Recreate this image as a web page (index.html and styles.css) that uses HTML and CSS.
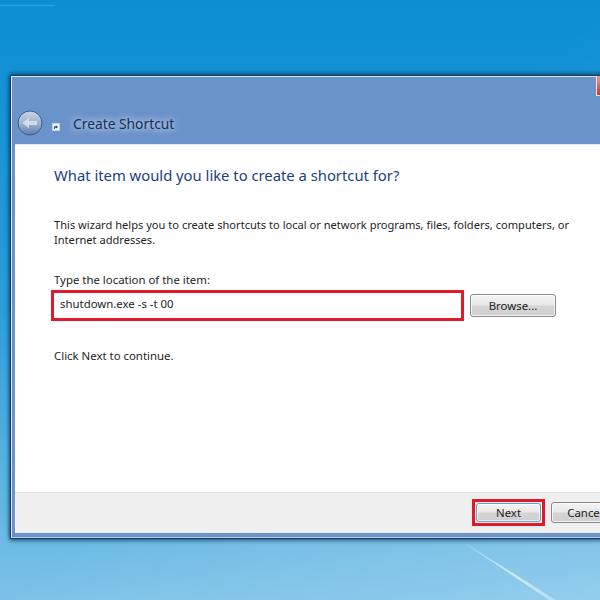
FILE: index.html
```html
<!DOCTYPE html>
<html lang="en">
<head>
<meta charset="utf-8">
<title>Create Shortcut</title>
<link rel="stylesheet" href="styles.css">
</head>
<body>
<main class="desktop">
  <svg class="streak" width="600" height="600" viewBox="0 0 600 600" aria-hidden="true">
    <defs>
      <linearGradient id="streakFade" x1="0" y1="0" x2="1" y2="0">
        <stop offset="0" stop-color="#ffffff" stop-opacity=".3"/>
        <stop offset=".6" stop-color="#ffffff" stop-opacity=".6"/>
        <stop offset="1" stop-color="#ffffff" stop-opacity=".3"/>
      </linearGradient>
    </defs>
    <path d="M458 539 L556 600 L549 600 Z" fill="url(#streakFade)"/>
    <path d="M0 5.500 H55" stroke="#ffffff" stroke-opacity=".16" stroke-width="1.500"/>
  </svg>
  <section class="window">
    <div class="close"></div>
    <header class="titlebar">
      <svg class="back" width="28" height="28" viewBox="0 0 28 28" aria-hidden="true">
        <defs>
          <linearGradient id="backFill" x1="0" y1="0" x2="0" y2="1">
            <stop offset="0" stop-color="#c9d6e6"/>
            <stop offset=".5" stop-color="#9db3d0"/>
            <stop offset="1" stop-color="#5f7fae"/>
          </linearGradient>
        </defs>
        <circle cx="14" cy="14" r="12" fill="url(#backFill)" stroke="#3f5a85" stroke-width="1"/>
        <path d="M6.500 14 L13 8.500 V12 H21 V16 H13 V19.500 Z" fill="#dfe7f1" opacity=".8"/>
      </svg>
      <svg class="appicon" width="8" height="8" viewBox="0 0 10 10" aria-hidden="true">
        <rect x=".5" y=".5" width="9" height="9" fill="#f4f7fb" stroke="#c3d0e3"/>
        <path d="M3 7.500 V5 H6 M4.700 3.500 L6.500 5 L4.700 6.500" fill="none" stroke="#1d3f73" stroke-width="1.300"/>
      </svg>
      <h1 class="wintitle">Create Shortcut</h1>
    </header>
    <div class="client">
      <div class="content">
        <h2 class="heading">What item would you like to create a shortcut for?</h2>
        <p class="intro">This wizard helps you to create shortcuts to local or network programs, files, folders, computers, or Internet addresses.</p>
        <label class="label">Type the location of the item:</label>
        <div class="inputrow">
          <div class="field">shutdown.exe -s -t 00</div>
          <div class="btn browse">Browse...</div>
        </div>
        <p class="continue">Click Next to continue.</p>
      </div>
      <footer class="footer">
        <div class="nextmark"><div class="btn next">Next</div></div>
        <div class="btn cancel">Cancel</div>
      </footer>
    </div>
  </section>
</main>
</body>
</html>
```
FILE: styles.css
```css
* { box-sizing: border-box; }
html, body { margin: 0; padding: 0; }
body { width: 600px; height: 600px; overflow: hidden; font-family: "Noto Sans", "Open Sans", sans-serif; }
.desktop {
  position: relative;
  width: 600px;
  height: 600px;
  overflow: hidden;
  padding: 75px 0 0 10px;
  background:
    linear-gradient(135deg, rgba(255,255,255,0) 50%, rgba(255,255,255,.18) 100%),
    linear-gradient(180deg, #0b8dd4 0%, #2a9cd9 50%, #63b7e4 85%, #7cc2e8 100%);
}
.streak { position: absolute; left: 0; top: 0; }
.window {
  position: relative;
  width: 640px;
  height: 464px;
  background: #6b93cb;
  border: 1px solid #1c3d5c;
  border-right: 0;
  box-shadow: 0 2px 4px rgba(10,50,90,.55), 0 -2px 4px rgba(10,60,100,.55), -1px 0 3px rgba(10,60,100,.4), inset 1px 1px 0 #dbe8f6, inset 0 -1px 0 #b9cce6;
  padding: 0 0 5px 4px;
  display: flex;
  flex-direction: column;
}
.close {
  position: absolute;
  left: 585px;
  top: 0;
  width: 30px;
  height: 20px;
  background: linear-gradient(180deg, #e89a90, #c8392c);
  border: 1px solid #f0e6ea;
  border-top: 0;
}
.titlebar {
  height: 68px;
  display: flex;
  align-items: center;
  padding: 26px 0 0 1px;
  flex: none;
}
.back { flex: none; }
.appicon { flex: none; margin: 7px 0 0 8px; }
.wintitle {
  margin: 0 0 0 13px;
  font-size: 13.800px;
  font-weight: 400;
  color: #1b2f50;
  text-shadow: 0 0 6px rgba(220,232,248,.9), 0 0 10px rgba(220,232,248,.7);
}
.client {
  flex: 1;
  background: #fff;
  display: flex;
  flex-direction: column;
  box-shadow: inset 0 1px 0 #dfe8f4;
}
.content { flex: 1; padding: 20px 0 0 39px; color: #1e1e1e; }
.heading {
  margin: 0;
  font-size: 14.800px;
  line-height: 22px;
  font-weight: 400;
  color: #1a3f80;
}
.intro {
  margin: 31px 0 0;
  width: 530px;
  font-size: 11.100px;
  line-height: 15px;
}
.label { display: block; margin-top: 25px; font-size: 11.400px; line-height: 15px; }
.inputrow { display: flex; align-items: center; margin: 3px 0 0 -3px; }
.field {
  width: 413px;
  height: 31px;
  border: 3px solid #e3182d;
  padding-left: 6px;
  font-size: 11.400px;
  line-height: 21px;
}
.btn {
  display: flex;
  align-items: center;
  justify-content: center;
  font-size: 11.400px;
  color: #222;
  border: 1px solid #8a8a8a;
  border-radius: 3px;
  background: linear-gradient(180deg, #f4f4f4 0%, #e8e8e8 48%, #d5d5d5 52%, #cfcfcf 100%);
  box-shadow: inset 0 0 0 1px rgba(255,255,255,.7);
}
.browse { width: 86px; height: 23px; margin: 0 0 1px 6px; }
.continue { margin: 27px 0 0; font-size: 11.400px; line-height: 15px; }
.footer {
  height: 41px;
  flex: none;
  background: #eeefee;
  border-top: 1px solid #dcdcdc;
  box-shadow: inset 1px 0 0 #f8f8f8;
  display: flex;
  align-items: center;
  padding: 0 0 2px 457px;
  gap: 6px;
}
.nextmark { border: 3px solid #e3182d; padding: 1px; flex: none; }
.next { width: 65px; height: 19px; border-color: #5fa3bd; }
.cancel { width: 68px; height: 21px; flex: none; }
```
